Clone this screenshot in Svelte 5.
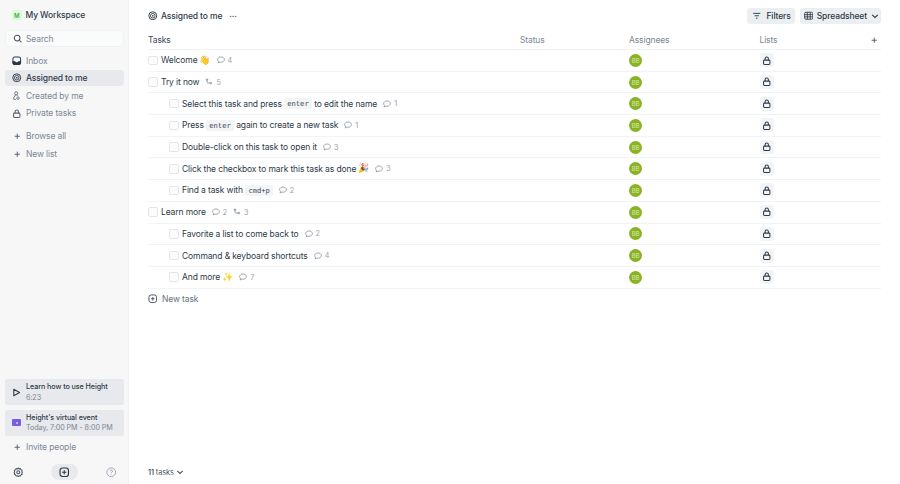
<script>
  const tasks = [
    { parts: [{ t: 'Welcome' }, { e: '👋' }], c: 4 },
    { parts: [{ t: 'Try it now' }], s: 5 },
    { sub: true, parts: [{ t: 'Select this task and press' }, { k: 'enter' }, { t: 'to edit the name' }], c: 1 },
    { sub: true, parts: [{ t: 'Press' }, { k: 'enter' }, { t: 'again to create a new task' }], c: 1 },
    { sub: true, parts: [{ t: 'Double-click on this task to open it' }], c: 3 },
    { sub: true, parts: [{ t: 'Click the checkbox to mark this task as done' }, { e: '🎉' }], c: 3 },
    { sub: true, parts: [{ t: 'Find a task with' }, { k: 'cmd+p' }], c: 2 },
    { parts: [{ t: 'Learn more' }], c: 2, s: 3 },
    { sub: true, parts: [{ t: 'Favorite a list to come back to' }], c: 2 },
    { sub: true, parts: [{ t: 'Command & keyboard shortcuts' }], c: 4 },
    { sub: true, parts: [{ t: 'And more' }, { e: '✨' }], c: 7 }
  ];
</script>

{#snippet target()}
  <svg class="ic" viewBox="0 0 12 12" fill="none" stroke="currentColor"><circle cx="6" cy="6" r="5" stroke-width="1.2"/><circle cx="6" cy="6" r="2.9" stroke-width="1.1"/><circle cx="6" cy="6" r="1.1" fill="currentColor" stroke="none"/></svg>
{/snippet}
{#snippet lock()}
  <svg class="ic" viewBox="0 0 12 12" fill="none" stroke="currentColor" stroke-width="1.3"><rect x="2" y="5.2" width="8" height="5.4" rx="1.2"/><path d="M3.9 5.2V3.5a2.1 2.1 0 0 1 4.2 0v1.7"/></svg>
{/snippet}
{#snippet plus()}
  <svg class="plus" viewBox="0 0 8 8" stroke="currentColor" stroke-width="1.2"><path d="M4 .8v6.4M.8 4h6.4"/></svg>
{/snippet}
{#snippet comment(n)}
  <span class="meta"><svg viewBox="0 0 10 10" fill="none" stroke="currentColor" stroke-width=".8"><path d="M5 1.2c2.3 0 4.2 1.4 4.2 3.3S7.3 7.8 5 7.8c-.5 0-1 0-1.4-.2L1.4 8.7l.5-2C1.2 6.1.8 5.4.8 4.5.8 2.6 2.7 1.2 5 1.2z"/></svg>{n}</span>
{/snippet}
{#snippet subtasks(n)}
  <span class="meta"><svg viewBox="0 0 10 10" fill="none" stroke="currentColor" stroke-width=".9"><path d="M2.5 2v2.7c0 1 .6 1.6 1.6 1.6h2.2"/><circle cx="2.5" cy="2" r=".9"/><circle cx="7.3" cy="6.4" r="1"/></svg>{n}</span>
{/snippet}

<div class="app">
  <aside class="side">
    <div class="ws"><span class="logo">M</span><span>My Workspace</span></div>
    <div class="search">
      <svg class="ic" viewBox="0 0 12 12" fill="none" stroke="currentColor" stroke-width="1.3"><circle cx="5.2" cy="5.2" r="3.6"/><path d="M7.9 7.9l2.8 2.8"/></svg>
      <span>Search</span>
    </div>
    <nav class="nav">
      <div class="item">
        <svg class="ic dark" viewBox="0 0 12 12" stroke="currentColor" stroke-width="1.3" fill="none"><rect x="1.2" y="1.4" width="9.600" height="9.2" rx="2"/><path d="M1.2 7.3h2.600l.8 1.2h2.800l.8-1.2h2.600v1.300a2 2 0 0 1-2 2H3.200a2 2 0 0 1-2-2z" fill="currentColor"/></svg>
        <span>Inbox</span>
      </div>
      <div class="item active">{@render target()}<span>Assigned to me</span></div>
      <div class="item">
        <svg class="ic" viewBox="0 0 12 12" fill="none" stroke="currentColor" stroke-width="1"><circle cx="5.2" cy="2.9" r="1.9"/><path d="M4 4.600v1.700L2.300 7.600v3h2.600M6.500 4.600v1.700"/><circle cx="7.6" cy="9" r="1.6"/></svg>
        <span>Created by me</span>
      </div>
      <div class="item">{@render lock()}<span>Private tasks</span></div>
    </nav>
    <div class="nav second">
      <div class="item">{@render plus()}<span>Browse all</span></div>
      <div class="item">{@render plus()}<span>New list</span></div>
    </div>
    <div class="spacer"></div>
    <div class="card">
      <svg class="play" viewBox="0 0 10 10" fill="none" stroke="currentColor" stroke-width="1.2" stroke-linejoin="round"><path d="M2 1.4l6.4 3.6L2 8.6z"/></svg>
      <div class="cardtext"><b>Learn how to use Height</b><span>6:23</span></div>
    </div>
    <div class="card">
      <span class="event"><i></i></span>
      <div class="cardtext"><b>Height's virtual event</b><span>Today, 7:00 PM - 8:00 PM</span></div>
    </div>
    <div class="item invite">{@render plus()}<span>Invite people</span></div>
    <div class="foot">
      <svg class="fic" viewBox="0 0 12 12" fill="none" stroke="currentColor" stroke-width="1.2"><circle cx="6" cy="6" r="1.7"/><path d="M6 1.2l1 .9 1.4-.2.7 1.2 1.3.6-.3 1.4.6 1-.6 1 .3 1.3-1.3.6-.7 1.2-1.4-.2-1 .9-1-.9-1.4.2-.7-1.2-1.3-.6.3-1.3-.6-1 .6-1-.3-1.4 1.3-.6.7-1.2 1.4.2z"/></svg>
      <span class="add"><svg class="fic dark" viewBox="0 0 12 12" fill="none" stroke="currentColor" stroke-width="1.3"><rect x="1.2" y="1.2" width="9.6" height="9.6" rx="2.8"/><path d="M6 3.6v4.8M3.6 6h4.8"/></svg></span>
      <svg class="fic light" viewBox="0 0 12 12" fill="none" stroke="currentColor" stroke-width=".9"><circle cx="6" cy="6" r="5"/><path d="M4.6 4.7A1.4 1.4 0 1 1 6.7 6c-.5.3-.7.6-.7 1.1M6 8.3v.6"/></svg>
    </div>
  </aside>

  <main class="main">
    <header class="top">
      <div class="title">{@render target()}<span>Assigned to me</span><span class="dots">···</span></div>
      <div class="actions">
        <div class="btn filters">
          <svg class="ic" viewBox="0 0 12 12" fill="none" stroke="currentColor" stroke-width="1.2"><path d="M1.5 3h9M3.3 6h5.4M5 9h2"/></svg>
          <span>Filters</span>
        </div>
        <div class="btn sheet">
          <svg class="ic" viewBox="0 0 12 12" fill="none" stroke="currentColor" stroke-width="1.1"><rect x=".8" y="1.6" width="10.4" height="8.8" rx="1.8"/><path d="M.8 4.6h10.4M.8 7.4h10.4M4.2 1.6v8.8M7.8 1.6v8.8"/></svg>
          <span>Spreadsheet</span>
          <svg class="chev" viewBox="0 0 8 8" fill="none" stroke="currentColor" stroke-width="1.1"><path d="M1.2 2.8L4 5.5l2.8-2.7"/></svg>
        </div>
      </div>
    </header>

    <div class="table">
      <div class="row head">
        <span class="taskhead">Tasks</span>
        <span>Status</span>
        <span>Assignees</span>
        <span class="listhead"><span>Lists</span>{@render plus()}</span>
      </div>
      {#each tasks as task}
        <div class="row">
          <div class="cell" class:sub={task.sub}>
            <span class="check"></span>
            {#each task.parts as p}
              {#if p.t}<span>{p.t}</span>{:else if p.k}<code>{p.k}</code>{:else}<span class="emoji">{p.e}</span>{/if}
            {/each}
            {#if task.c}{@render comment(task.c)}{/if}
            {#if task.s}{@render subtasks(task.s)}{/if}
          </div>
          <div></div>
          <div><span class="avatar">BB</span></div>
          <div><span class="lockchip">{@render lock()}</span></div>
        </div>
      {/each}
    </div>

    <div class="newtask">
      <svg class="ic" viewBox="0 0 12 12" fill="none" stroke="currentColor" stroke-width="1.1"><rect x="1.2" y="1.2" width="9.6" height="9.6" rx="2.8"/><path d="M6 3.8v4.4M3.8 6h4.4"/></svg>
      <span>New task</span>
    </div>
    <div class="spacer"></div>
    <div class="count"><span><b>11</b> tasks</span><svg class="chev" viewBox="0 0 8 8" fill="none" stroke="currentColor" stroke-width="1.1"><path d="M1.2 2.8L4 5.5l2.8-2.7"/></svg></div>
  </main>
</div>

<style>
  :global(body) { margin: 0; background: #fff; }
  .app {
    display: flex; width: 900px; height: 484px; overflow: hidden;
    font-family: Inter, "Liberation Sans", sans-serif; font-size: 8.5px; letter-spacing: -.12px; color: #3c4858;
  }
  svg { flex: none; display: block; }
  .ic { width: 9.5px; height: 9.5px; }
  .plus { width: 6.5px; height: 6.5px; }
  .spacer { flex: 1; }

  .side {
    flex: none; display: flex; flex-direction: column;
    background: #f7f7f8; border-right: 1px solid #eef0f1; padding: 0 4px 0 5px; box-sizing: content-box;
    width: 119px; color: #7c8794;
  }
  .ws { display: flex; align-items: center; gap: 4px; height: 30px; padding-left: 7px; color: #303c4c; font-weight: 500; }
  .logo { width: 9.5px; height: 9.5px; border-radius: 2px; background: #e0f9de; color: #35b24a; font-size: 6px; font-weight: 600; display: flex; align-items: center; justify-content: center; }
  .search { display: flex; align-items: center; gap: 3.5px; height: 15px; padding-left: 7px; margin-bottom: 5.5px; background: #fafbfb; border: 1px solid #f0f1f3; border-radius: 4px; color: #7c8794; }
  .search .ic { color: #4a5462; }
  .nav { display: flex; flex-direction: column; gap: 1.6px; }
  .second { margin-top: 7px; }
  .item { display: flex; align-items: center; height: 16px; padding-left: 7px; border-radius: 4px; }
  .item > span { margin-left: 4.5px; }
  .item > .plus { margin-left: 1.5px; margin-right: 1.5px; color: #56606e; }
  .item .ic { color: #56606e; }
  .item .dark { color: #2d3745; }
  .active { background: #e7e9ec; color: #2e3a49; font-weight: 500; }
  .active .ic { color: #2e3a49; }
  .card { display: flex; align-items: center; height: 26px; margin-bottom: 4.5px; background: #e7e9ec; border-radius: 2px; }
  .play { width: 9px; height: 9px; margin-left: 7px; margin-right: 5px; color: #2e3a49; }
  .event { display: flex; align-items: center; justify-content: center; width: 9px; height: 7px; margin-left: 7px; margin-right: 5px; background: #7b5be0; border-radius: 1px; }
  .event i { width: 2px; height: 2px; border-radius: 50%; background: #d9ceff; }
  .cardtext { display: flex; flex-direction: column; gap: 1.5px; font-size: 7.2px; line-height: 9px; letter-spacing: -.08px; }
  .cardtext b { font-weight: 500; color: #2e3a49; }
  .invite { margin-top: -1px; }
  .foot { display: flex; align-items: center; justify-content: space-between; height: 24px; margin-top: 5px; padding: 0 8px; }
  .fic { width: 10.5px; height: 10.5px; color: #4a5462; }
  .fic.dark { color: #2d3745; }
  .fic.light { color: #8e98a3; }
  .add { width: 27px; height: 16px; border-radius: 8px; background: #e7e9ec; display: flex; align-items: center; justify-content: center; }

  .main { flex: 1; min-width: 0; display: flex; flex-direction: column; padding: 0 19px; }
  .top { display: flex; align-items: center; justify-content: space-between; height: 31px; flex: none; }
  .title { display: flex; align-items: center; gap: 3.5px; color: #2e3a49; font-weight: 500; }
  .dots { margin-left: 3.5px; font-weight: 600; font-size: 8px; color: #56606e; letter-spacing: 0; }
  .actions { display: flex; gap: 5px; }
  .btn { display: flex; align-items: center; height: 16px; background: #eceff1; border-radius: 3px; color: #2e3a49; font-weight: 500; }
  .filters { gap: 4.5px; padding: 0 4px 0 5px; }
  .sheet { gap: 3.5px; padding: 0 2.5px 0 4px; }
  .chev { width: 8px; height: 8px; }

  .row {
    display: grid; grid-template-columns: 372px 109px 130.5px 1fr; height: 21.7px; box-sizing: border-box;
    align-items: center; border-bottom: 1px solid #f2f3f5;
  }
  .head { height: 19px; color: #7c8794; }
  .taskhead { color: #3c4858; }
  .listhead { display: flex; align-items: center; justify-content: space-between; padding-right: 4px; }
  .listhead .plus { color: #56606e; }
  .cell { display: flex; align-items: center; gap: 2.5px; white-space: nowrap; color: #2e3a49; }
  .sub { padding-left: 21px; }
  .check { width: 7.5px; height: 7.5px; margin-right: 1px; border: 1px solid #e3e6e9; border-radius: 2px; background: #fcfcfd; }
  code { font-family: "DejaVu Sans Mono", "Liberation Mono", monospace; font-size: 7.1px; letter-spacing: 0; padding: 1px 3px; background: #f3f4f6; border-radius: 2px; color: #3c4858; }
  .emoji { font-size: 9px; line-height: 1; font-family: "Noto Color Emoji", sans-serif; margin-left: -.5px; }
  .meta { display: inline-flex; align-items: center; gap: 3px; margin-left: 3.5px; font-size: 7.2px; color: #98a1ab; }
  .meta svg { width: 8px; height: 8px; color: #6d7885; }
  .avatar { display: flex; align-items: center; justify-content: center; width: 13px; height: 13px; border-radius: 50%; background: #8ab229; color: #d7ea9e; font-size: 6px; }
  .lockchip { display: flex; align-items: center; justify-content: center; width: 14px; height: 14px; background: #f3f4f6; border-radius: 3px; color: #2e3a49; }

  .newtask { display: flex; align-items: center; gap: 4.5px; height: 21px; flex: none; color: #66717e; }
  .newtask .ic { color: #3c4858; }
  .count { display: flex; align-items: center; gap: 2.5px; height: 24px; font-size: 7.4px; color: #4a5462; }
  .count b { font-weight: 500; color: #2e3a49; }
</style>
